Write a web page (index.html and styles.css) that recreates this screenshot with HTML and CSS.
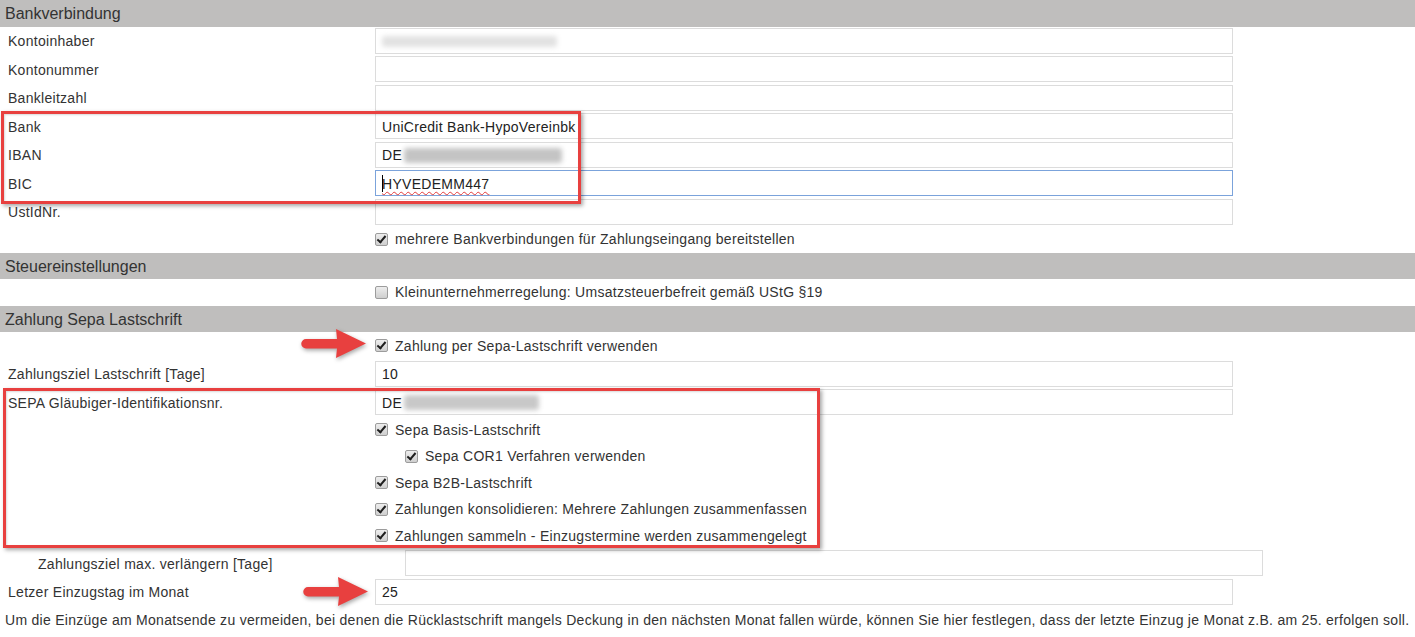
FILE: index.html
```html
<!DOCTYPE html>
<html lang="de">
<head>
<meta charset="utf-8">
<title>Bankverbindung</title>
<link rel="stylesheet" href="styles.css">
</head>
<body>
<div class="page">
  <div class="section-head">Bankverbindung</div>
  <div class="row"><div class="lbl">Kontoinhaber</div><div class="field"><span class="blur blur-light"></span></div></div>
  <div class="row"><div class="lbl">Kontonummer</div><div class="field"></div></div>
  <div class="row"><div class="lbl">Bankleitzahl</div><div class="field"></div></div>
  <div class="row"><div class="lbl">Bank</div><div class="field">UniCredit Bank-HypoVereinbk</div></div>
  <div class="row"><div class="lbl">IBAN</div><div class="field">DE<span class="blur blur-iban"></span></div></div>
  <div class="row"><div class="lbl">BIC</div><div class="field focus"><span class="caret"></span><span class="misspelled">HYVEDEMM447</span></div></div>
  <div class="row"><div class="lbl">UstIdNr.</div><div class="field"></div></div>
  <div class="check-row"><span class="cb checked"></span><span>mehrere Bankverbindungen für Zahlungseingang bereitstellen</span></div>

  <div class="section-head">Steuereinstellungen</div>
  <div class="check-row"><span class="cb"></span><span>Kleinunternehmerregelung: Umsatzsteuerbefreit gemäß UStG §19</span></div>

  <div class="section-head">Zahlung Sepa Lastschrift</div>
  <div class="check-row first"><span class="cb checked"></span><span>Zahlung per Sepa-Lastschrift verwenden</span></div>
  <div class="row"><div class="lbl">Zahlungsziel Lastschrift [Tage]</div><div class="field">10</div></div>
  <div class="row"><div class="lbl">SEPA Gläubiger-Identifikationsnr.</div><div class="field">DE<span class="blur blur-sepa"></span></div></div>
  <div class="check-row"><span class="cb checked"></span><span>Sepa Basis-Lastschrift</span></div>
  <div class="check-row nested"><span class="cb checked"></span><span>Sepa COR1 Verfahren verwenden</span></div>
  <div class="check-row"><span class="cb checked"></span><span>Sepa B2B-Lastschrift</span></div>
  <div class="check-row"><span class="cb checked"></span><span>Zahlungen konsolidieren: Mehrere Zahlungen zusammenfassen</span></div>
  <div class="check-row"><span class="cb checked"></span><span>Zahlungen sammeln - Einzugstermine werden zusammengelegt</span></div>
  <div class="row indented"><div class="lbl">Zahlungsziel max. verlängern [Tage]</div><div class="field"></div></div>
  <div class="row"><div class="lbl">Letzer Einzugstag im Monat</div><div class="field">25</div></div>
  <p class="note">Um die Einzüge am Monatsende zu vermeiden, bei denen die Rücklastschrift mangels Deckung in den nächsten Monat fallen würde, können Sie hier festlegen, dass der letzte Einzug je Monat z.B. am 25. erfolgen soll.</p>

  <div class="mark mark-bank"></div>
  <div class="mark mark-sepa"></div>
  <svg class="arrow arrow-1" width="70" height="36" viewBox="0 0 70 36"><path d="M6,13 L37,13 L36,3 L66,17.5 L36,32 L37,22.5 L6,22.5 A4.75,4.75 0 0 1 6,13 Z"/></svg>
  <svg class="arrow arrow-2" width="70" height="36" viewBox="0 0 70 36"><path d="M6,13 L37,13 L36,3 L66,17.5 L36,32 L37,22.5 L6,22.5 A4.75,4.75 0 0 1 6,13 Z"/></svg>
</div>
</body>
</html>
```
FILE: styles.css
```css
html, body {
  margin: 0;
  padding: 0;
  background: #fff;
}
body {
  font-family: "Liberation Sans", Arial, sans-serif;
  font-size: 14px;
  letter-spacing: 0.28px;
  color: #333;
}
.page {
  position: relative;
  width: 1415px;
  height: 637px;
  overflow: hidden;
}
.section-head {
  height: 26.5px;
  line-height: 27px;
  background: #bfbebd;
  font-size: 16px;
  letter-spacing: 0;
  padding-left: 5px;
  color: #333;
}
.row {
  display: flex;
  align-items: center;
  height: 28.5px;
}
.lbl {
  width: 367px;
  padding-left: 8px;
  padding-top: 1px;
  flex: none;
}
.field {
  box-sizing: border-box;
  width: 858px;
  height: 26px;
  border: 1px solid #dcdcdc;
  padding-left: 6px;
  padding-top: 1px;
  display: flex;
  align-items: center;
  color: #222;
  flex: none;
  position: relative;
}
.field.focus {
  border-color: #7ba3db;
}
.row.indented {
  padding-left: 30px;
}
.caret {
  width: 1px;
  height: 17px;
  background: #000;
  position: absolute;
  left: 6px;
  top: 4px;
}
.misspelled {
  text-decoration: underline wavy #e23b3b;
  text-decoration-thickness: 1px;
  text-underline-offset: 2px;
}
.blur {
  display: inline-block;
  border-radius: 3px;
  filter: blur(2.5px);
}
.blur-light {
  width: 175px;
  height: 11px;
  background: #e2e2e2;
}
.blur-iban {
  width: 158px;
  height: 15px;
  background: #c4c4c4;
  margin-left: 2px;
}
.blur-sepa {
  width: 135px;
  height: 15px;
  background: #c8c8c8;
  margin-left: 2px;
}
.check-row {
  display: flex;
  align-items: center;
  height: 26.5px;
  padding-left: 375px;
  gap: 7px;
}
.check-row.first {
  height: 27.5px;
}
.check-row.nested {
  padding-left: 405px;
}
.cb {
  box-sizing: border-box;
  width: 13px;
  height: 13px;
  border: 1px solid #9c9c9c;
  border-radius: 2px;
  background: linear-gradient(#ededed, #cfcfcf);
  flex: none;
  position: relative;
}
.cb.checked::after {
  content: "";
  position: absolute;
  left: 3px;
  top: 0px;
  width: 3px;
  height: 7px;
  border: solid #1e1e1e;
  border-width: 0 2px 2px 0;
  transform: rotate(40deg);
}
.note {
  margin: 0;
  padding: 6px 0 0 5px;
  white-space: nowrap;
  line-height: 16px;
}
.mark {
  position: absolute;
  box-sizing: border-box;
  border: 3px solid #e8403f;
  box-shadow: 2px 2px 4px rgba(0, 0, 0, 0.35), inset 1px 1px 2px rgba(0, 0, 0, 0.15);
}
.mark-bank {
  left: 1px;
  top: 111px;
  width: 580px;
  height: 93px;
}
.mark-sepa {
  left: 3px;
  top: 388px;
  width: 817px;
  height: 160px;
}
.arrow {
  position: absolute;
  fill: #e8403f;
  filter: drop-shadow(1px 2px 2px rgba(0, 0, 0, 0.35));
}
.arrow-1 {
  left: 300px;
  top: 326px;
}
.arrow-2 {
  left: 302px;
  top: 574px;
}
```
